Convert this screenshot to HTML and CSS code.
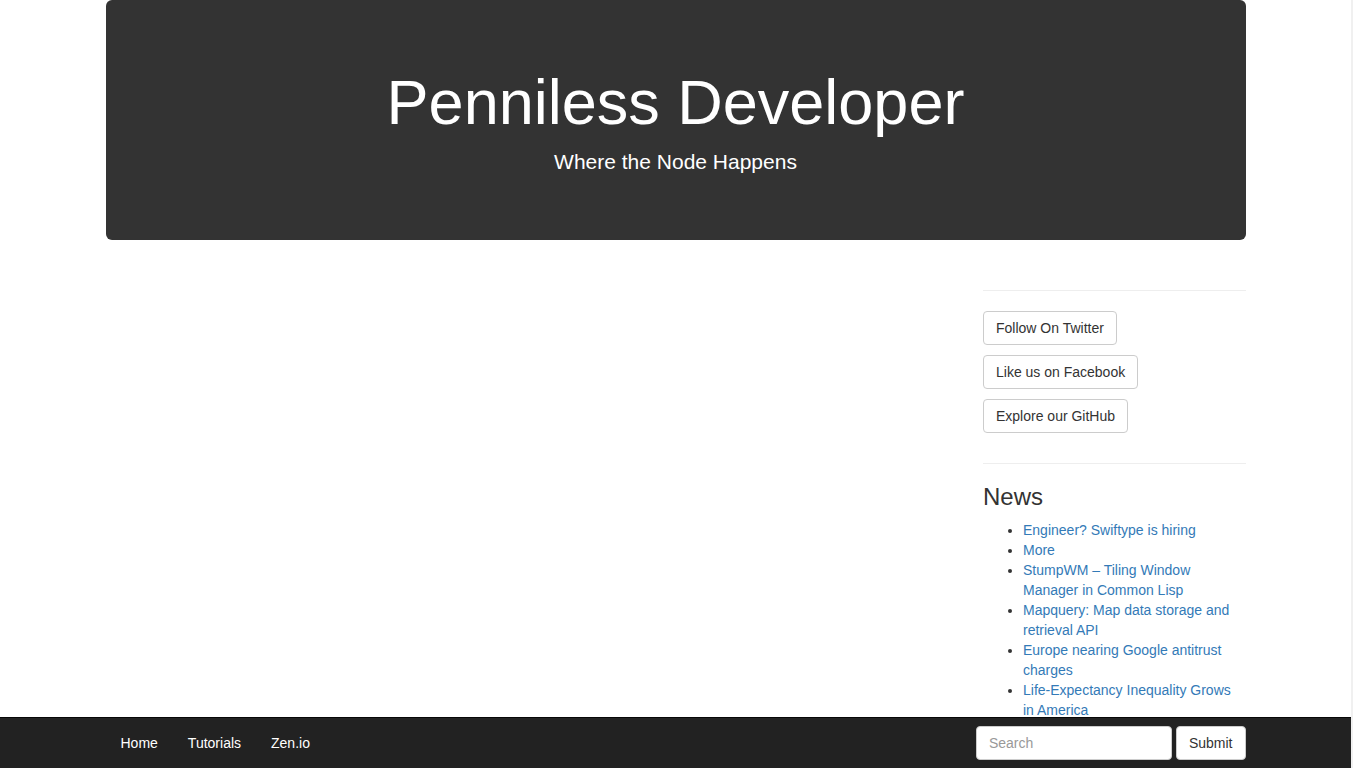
FILE: index.html
```html
<!DOCTYPE html>
<html lang="en">
<head>
<meta charset="utf-8">
<title>Penniless Developer</title>
<link rel="stylesheet" href="styles.css">
</head>
<body>
<div class="container">
  <div class="jumbotron">
    <h1>Penniless Developer</h1>
    <p>Where the Node Happens</p>
  </div>
  <div class="row">
    <div class="main"></div>
    <aside class="sidebar">
      <hr>
      <div class="social">
        <p class="btn-wrap"><a class="btn" href="#">Follow On Twitter</a></p>
        <p class="btn-wrap"><a class="btn" href="#">Like us on Facebook</a></p>
        <p class="btn-wrap"><a class="btn" href="#">Explore our GitHub</a></p>
      </div>
      <hr>
      <h3>News</h3>
      <ul class="news">
        <li><a href="#">Engineer? Swiftype is hiring</a></li>
        <li><a href="#">More</a></li>
        <li><a href="#">StumpWM – Tiling Window Manager in Common Lisp</a></li>
        <li><a href="#">Mapquery: Map data storage and retrieval API</a></li>
        <li><a href="#">Europe nearing Google antitrust charges</a></li>
        <li><a href="#">Life-Expectancy Inequality Grows in America</a></li>
      </ul>
    </aside>
  </div>
</div>
<nav class="navbar">
  <div class="container navbar-inner">
    <ul class="nav">
      <li><a href="#">Home</a></li>
      <li><a href="#">Tutorials</a></li>
      <li><a href="#">Zen.io</a></li>
    </ul>
    <form class="navbar-form">
      <input class="form-control" type="text" placeholder="Search">
      <button class="btn" type="submit">Submit</button>
    </form>
  </div>
</nav>
</body>
</html>
```
FILE: styles.css
```css
* { box-sizing: border-box; }
html { margin: 0; padding: 0; background: #f0f0f0; }
body {
  margin: 0 2px 0 0;
  padding: 0 0 70px;
  font-family: "Liberation Sans", Arial, Helvetica, sans-serif;
  font-size: 14px;
  line-height: 1.428571;
  color: #333;
  background: #fff;
  min-height: 100vh;
}
a { color: #337ab7; text-decoration: none; }
.container {
  width: 1170px;
  margin: 0 auto;
  padding: 0 15px;
}
.jumbotron {
  background: #333;
  color: #fff;
  border-radius: 6px;
  padding: 48px 60px;
  margin-bottom: 30px;
  text-align: center;
}
.jumbotron h1 {
  font-size: 63px;
  font-weight: 400;
  line-height: 1.1;
  margin: 20px 0 10px;
}
.jumbotron p {
  font-size: 21px;
  font-weight: 200;
  line-height: 30px;
  margin: 0 0 15px;
}
.row {
  display: grid;
  grid-template-columns: 3fr 1fr;
  margin: 0 -15px;
}
.main, .sidebar { padding: 0 15px; min-height: 1px; }
hr {
  margin: 20px 0;
  border: 0;
  border-top: 1px solid #eee;
  height: 0;
}
.social { display: flow-root; }
.btn-wrap { margin: 0 0 10px; }
.btn {
  display: inline-block;
  padding: 6px 12px;
  font-family: inherit;
  font-size: 14px;
  line-height: 20px;
  color: #333;
  background: #fff;
  border: 1px solid #ccc;
  border-radius: 4px;
  cursor: pointer;
  vertical-align: middle;
}
h3 {
  font-size: 24px;
  font-weight: 500;
  line-height: 1.1;
  margin: 20px 0 10px;
  color: #333;
}
.news {
  margin: 0 0 10px;
  padding-left: 40px;
}
.navbar {
  position: fixed;
  left: 0;
  right: 2px;
  bottom: 0;
  height: 51px;
  background: #222;
  border-top: 1px solid #080808;
}
.navbar-inner {
  display: flex;
  justify-content: space-between;
  align-items: flex-start;
}
.nav {
  display: flex;
  list-style: none;
  margin: 0;
  padding: 0;
}
.nav a {
  display: block;
  padding: 15px;
  line-height: 20px;
  color: #fff;
}
.navbar-form {
  display: flex;
  gap: 4px;
  margin: 8px 0 0;
}
.form-control {
  width: 196px;
  height: 34px;
  padding: 6px 12px;
  font-family: inherit;
  font-size: 14px;
  line-height: 20px;
  color: #555;
  background: #fff;
  border: 1px solid #ccc;
  border-radius: 4px;
}
.form-control::placeholder { color: #999; }
.navbar-form .btn { height: 34px; }
```
